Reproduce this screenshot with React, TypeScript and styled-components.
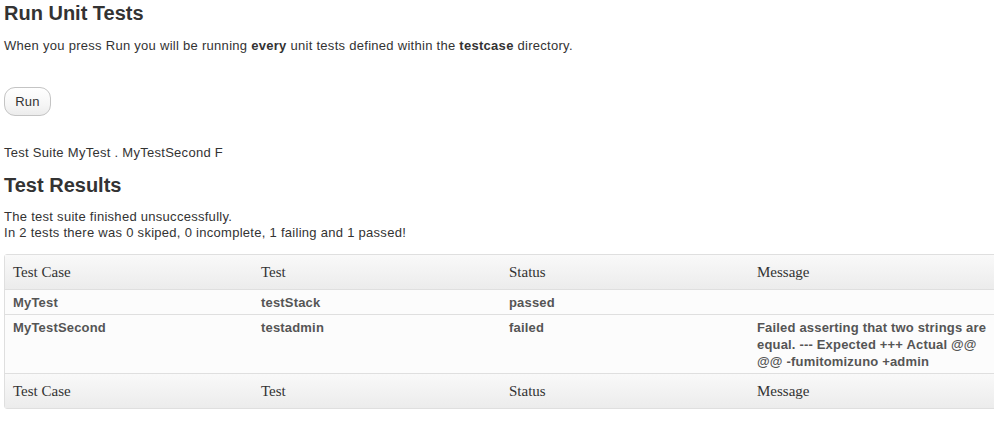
import React from "react";
import styled, { createGlobalStyle } from "styled-components";

const GlobalStyle = createGlobalStyle`
  html, body {
    margin: 0;
    padding: 0;
    overflow: hidden;
    background: #ffffff;
  }
  body {
    font-family: "Liberation Sans", Arial, Helvetica, sans-serif;
    font-size: 13px;
    line-height: 17px;
    color: #333333;
  }
`;

const Page = styled.div`
  padding: 1px 0 0 4px;
`;

const Heading = styled.h2`
  margin: 0;
  font-size: 20px;
  line-height: 24px;
  font-weight: bold;
  color: #333333;
`;

const Text = styled.p<{ $mt?: number }>`
  margin: ${(p) => p.$mt ?? 0}px 0 0;
  font-size: 13px;
  line-height: 17px;
  letter-spacing: 0.28px;
  color: #333333;
`;

const Lines = styled.div`
  margin-top: 12px;
  font-size: 13px;
  line-height: 16px;
  letter-spacing: 0.28px;
  color: #333333;
`;

const RunButton = styled.button`
  display: block;
  margin-top: 33px;
  height: 29px;
  width: 47px;
  padding: 0;
  font-family: "Liberation Sans", Arial, Helvetica, sans-serif;
  font-size: 13px;
  letter-spacing: 0.2px;
  color: #333333;
  border: 1px solid #c4c4c4;
  border-radius: 11px;
  background: linear-gradient(to bottom, #ffffff 0%, #f6f6f6 60%, #ececec 100%);
  cursor: pointer;
`;

const ResultsHeading = styled(Heading)`
  margin-top: 12px;
`;

const Table = styled.table`
  margin-top: 13px;
  width: 994px;
  table-layout: fixed;
  border-collapse: separate;
  border-spacing: 0;
  border: 1px solid #dfdfdf;
  border-radius: 3px;
  background: #fcfcfc;
`;

const HeadCell = styled.th<{ $foot?: boolean }>`
  text-align: left;
  font-family: "Liberation Serif", "Times New Roman", serif;
  font-weight: normal;
  font-size: 15px;
  line-height: 20px;
  color: #333333;
  padding: 7px 8px 7px;
  background: linear-gradient(to bottom, #f9f9f9 0%, #ececec 100%);
  border-bottom: ${(p) => (p.$foot ? "none" : "1px solid #dfdfdf")};
`;

const Cell = styled.td`
  vertical-align: top;
  font-size: 13px;
  line-height: 17px;
  font-weight: bold;
  letter-spacing: 0.18px;
  color: #555555;
  padding: 4px 8px 3px;
  border-bottom: 1px solid #dfdfdf;
  background: #fcfcfc;
`;

const columns = ["Test Case", "Test", "Status", "Message"];

const rows = [
  { testCase: "MyTest", test: "testStack", status: "passed", message: "" },
  {
    testCase: "MyTestSecond",
    test: "testadmin",
    status: "failed",
    message:
      "Failed asserting that two strings are equal. --- Expected +++ Actual @@ @@ -fumitomizuno +admin",
  },
];

export default function App() {
  return (
    <>
      <GlobalStyle />
      <Page>
        <Heading>Run Unit Tests</Heading>
        <Text $mt={12}>
          When you press Run you will be running <b>every</b> unit tests defined within the{" "}
          <b>testcase</b> directory.
        </Text>
        <RunButton>Run</RunButton>
        <Text $mt={28}>Test Suite MyTest . MyTestSecond F</Text>
        <ResultsHeading>Test Results</ResultsHeading>
        <Lines>
          The test suite finished unsuccessfully.
          <br />
          In 2 tests there was 0 skiped, 0 incomplete, 1 failing and 1 passed!
        </Lines>
        <Table>
          <thead>
            <tr>
              {columns.map((c) => (
                <HeadCell key={c}>{c}</HeadCell>
              ))}
            </tr>
          </thead>
          <tbody>
            {rows.map((r) => (
              <tr key={r.testCase}>
                <Cell>{r.testCase}</Cell>
                <Cell>{r.test}</Cell>
                <Cell>{r.status}</Cell>
                <Cell>{r.message}</Cell>
              </tr>
            ))}
          </tbody>
          <tfoot>
            <tr>
              {columns.map((c) => (
                <HeadCell key={c} $foot>
                  {c}
                </HeadCell>
              ))}
            </tr>
          </tfoot>
        </Table>
      </Page>
    </>
  );
}
